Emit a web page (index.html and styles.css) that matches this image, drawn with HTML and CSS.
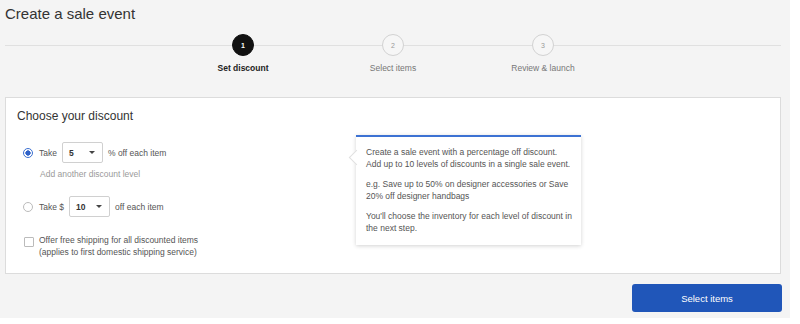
FILE: index.html
```html
<!DOCTYPE html>
<html lang="en">
<head>
<meta charset="utf-8">
<title>Create a sale event</title>
<link rel="stylesheet" href="styles.css">
</head>
<body>
<div class="page">
  <h1 class="title">Create a sale event</h1>

  <ol class="stepper">
    <li class="step step-active"><span class="step-dot">1</span><span class="step-label">Set discount</span></li>
    <li class="step"><span class="step-dot">2</span><span class="step-label">Select items</span></li>
    <li class="step"><span class="step-dot">3</span><span class="step-label">Review &amp; launch</span></li>
  </ol>

  <section class="card">
    <h2 class="card-title">Choose your discount</h2>
    <div class="card-body">
      <div class="options">
        <div class="option-row">
          <span class="radio radio-on"></span>
          <span class="opt-text">Take</span>
          <span class="select"><span class="select-value">5</span><span class="caret"></span></span>
          <span class="opt-text">% off each item</span>
        </div>
        <div class="add-level">Add another discount level</div>

        <div class="option-row option-row-2">
          <span class="radio"></span>
          <span class="opt-text">Take $</span>
          <span class="select"><span class="select-value">10</span><span class="caret"></span></span>
          <span class="opt-text">off each item</span>
        </div>

        <div class="check-row">
          <span class="checkbox"></span>
          <span class="check-text">Offer free shipping for all discounted items<br>(applies to first domestic shipping service)</span>
        </div>
      </div>

      <aside class="tip">
        <p>Create a sale event with a percentage off discount.<br>Add up to 10 levels of discounts in a single sale event.</p>
        <p>e.g. Save up to 50% on designer accessories or Save 20% off designer handbags</p>
        <p>You'll choose the inventory for each level of discount in the next step.</p>
      </aside>
    </div>
  </section>

  <div class="actions">
    <button class="btn-primary" type="button">Select items</button>
  </div>
</div>
</body>
</html>
```

FILE: styles.css
```css
* { box-sizing: border-box; }

html, body {
  margin: 0;
  padding: 0;
  background: #ffffff;
  font-family: "Liberation Sans", Arial, sans-serif;
  color: #555;
}

.page {
  width: 790px;
  height: 318px;
  background: #f4f4f4;
  padding: 5px 9px 0 5px;
}

.title {
  margin: 0;
  font-size: 15px;
  line-height: 18px;
  font-weight: normal;
  color: #333;
}

/* stepper */
.stepper {
  list-style: none;
  margin: 11px 0 0;
  padding: 0 0 0 163px;
  display: flex;
  background: linear-gradient(#e0e0e0, #e0e0e0) no-repeat 0 11px / 100% 1px;
}

.step {
  width: 150px;
  display: flex;
  flex-direction: column;
  align-items: center;
}

.step-dot {
  width: 22px;
  height: 22px;
  border-radius: 50%;
  border: 1px solid #d2d2d2;
  background: #f6f6f6;
  color: #999;
  font-size: 7px;
  display: flex;
  align-items: center;
  justify-content: center;
}

.step-label {
  margin-top: 6px;
  font-size: 8.5px;
  line-height: 12px;
  color: #777;
}

.step-active .step-dot {
  background: #111;
  border-color: #111;
  color: #fff;
  font-weight: bold;
}

.step-active .step-label {
  color: #222;
  font-weight: bold;
}

/* card */
.card {
  margin-top: 23px;
  background: #fff;
  border: 1px solid #dcdcdc;
  padding: 11px 11px 0 11px;
  height: 177px;
}

.card-title {
  margin: 0;
  font-size: 12px;
  line-height: 14px;
  font-weight: normal;
  color: #333;
}

.card-body {
  display: flex;
  margin-top: 12px;
}

.options {
  flex: 0 0 339px;
  padding: 7px 0 0 6px;
  font-size: 8.5px;
}

.option-row {
  display: flex;
  align-items: center;
  height: 21px;
}

.option-row-2 { margin-top: 16px; }

.radio {
  width: 10px;
  height: 10px;
  border-radius: 50%;
  border: 1px solid #bbb;
  background: #fff;
  margin-right: 6px;
  flex: none;
}

.radio-on {
  border-color: #3b6fd0;
  background: radial-gradient(circle, #2f62c9 0 2.4px, #fff 2.9px);
}

.opt-text {
  color: #555;
}

.select {
  width: 41px;
  height: 21px;
  border: 1px solid #d0d0d0;
  border-radius: 2px;
  margin: 0 5px;
  padding: 0 6px;
  display: flex;
  align-items: center;
  justify-content: space-between;
  background: #fff;
}

.select-value {
  color: #333;
  font-weight: bold;
}

.caret {
  width: 0;
  height: 0;
  border-left: 3px solid transparent;
  border-right: 3px solid transparent;
  border-top: 3px solid #444;
  margin-right: 1px;
}

.add-level {
  margin: 5px 0 0 17px;
  line-height: 12px;
  color: #9a9a9a;
}

.check-row {
  display: flex;
  align-items: flex-start;
  margin-top: 17px;
  padding-left: 1px;
}

.checkbox {
  width: 10px;
  height: 10px;
  border: 1px solid #bbb;
  border-radius: 1px;
  background: #fff;
  margin-top: 3px;
  margin-right: 5px;
  flex: none;
}

.check-text {
  line-height: 12px;
  color: #555;
}

/* tooltip */
.tip {
  position: relative;
  width: 225px;
  background: #fff;
  border-top: 2px solid #3d72d3;
  box-shadow: 0 1px 4px rgba(0, 0, 0, 0.18);
  padding: 10px 6px 11px 10px;
  font-size: 8.5px;
  line-height: 11.5px;
  color: #555;
  align-self: flex-start;
}

.tip::before {
  content: "";
  position: absolute;
  left: -5px;
  top: 15px;
  width: 10px;
  height: 10px;
  background: #fff;
  border-left: 1px solid #e0e0e0;
  border-bottom: 1px solid #e0e0e0;
  transform: rotate(45deg);
}

.tip p {
  margin: 0 0 9px;
}

.tip p:last-child { margin-bottom: 0; }

/* actions */
.actions {
  display: flex;
  justify-content: flex-end;
  margin-top: 10px;
  margin-right: -1px;
}

.btn-primary {
  width: 150px;
  height: 28px;
  border: 0;
  border-radius: 3px;
  background: #2056b9;
  color: #fff;
  font-family: "Liberation Sans", Arial, sans-serif;
  font-size: 9.5px;
}
```
